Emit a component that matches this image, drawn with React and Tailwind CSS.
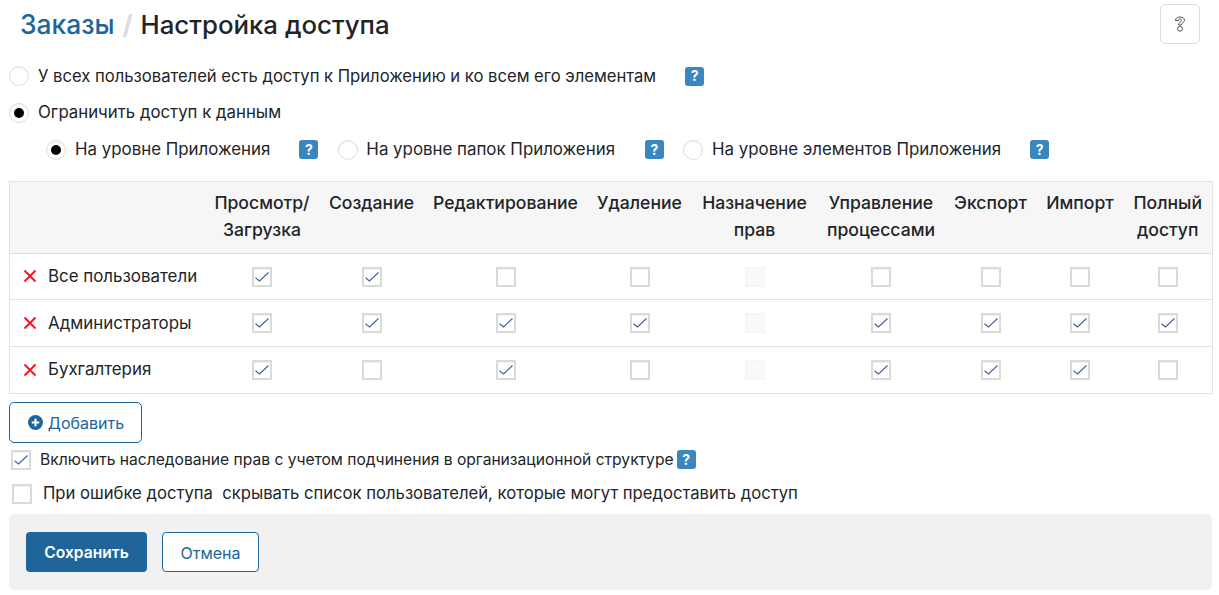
const Q = ({ className = "" }) => (
  <span className={"inline-flex h-[19px] w-[19px] items-center justify-center rounded-[3px] bg-[#3a87c0] text-[14px] leading-none font-bold text-white " + className}>?</span>
);

const Radio = ({ on }) => (
  <span className="flex h-[20px] w-[20px] shrink-0 items-center justify-center rounded-full border border-[#dddddd] bg-white shadow-[inset_0_1px_1px_rgba(0,0,0,0.05)]">
    {on && <span className="h-[10px] w-[10px] rounded-full bg-black" />}
  </span>
);

const Check = ({ on, disabled, className = "" }) => (
  <span className={"block h-[20px] w-[20px] shrink-0 border-2 " + (disabled ? "border-[#f6f6f6] bg-[#f9f9f9] " : "border-[#dadada] bg-white shadow-[inset_0_1px_1px_rgba(0,0,0,0.06)] ") + className}>
    {on && (
      <svg viewBox="0 0 16 16" className="h-[16px] w-[16px]" fill="none">
        <path d="M1.5 8.8 L5.5 12 L14.5 3.5" stroke="#3f6099" strokeWidth="1.1" />
      </svg>
    )}
  </span>
);

const headers = [
  ["Просмотр/", "Загрузка"],
  ["Создание"],
  ["Редактирование"],
  ["Удаление"],
  ["Назначение", "прав"],
  ["Управление", "процессами"],
  ["Экспорт"],
  ["Импорт"],
  ["Полный", "доступ"],
];

const rows = [
  ["Все пользователи", [1, 1, 0, 0, 2, 0, 0, 0, 0], "h-[46px]", ""],
  ["Администраторы", [1, 1, 1, 1, 2, 1, 1, 1, 1], "h-[47px]", "pt-[2px]"],
  ["Бухгалтерия", [1, 0, 1, 0, 2, 1, 1, 1, 0], "h-[47px]", ""],
];

const widths = ["w-[195px]", "w-[115px]", "w-[104px]", "w-[164px]", "w-[104px]", "w-[126px]", "w-[127px]", "w-[92px]", "w-[87px]", "w-[89px]"];

export default function App() {
  return (
    <div className="h-[595px] w-[1219px] overflow-hidden bg-white pr-[7px] pl-[9px] font-['Inter','Liberation_Sans',sans-serif] text-[16.63px] text-[#212529]">
      <div className="flex h-[50px] items-start justify-between">
        <h1 className="mt-[8px] ml-[11px] flex items-baseline text-[25.8px] leading-[32px] font-medium">
          <span className="text-[26.4px] text-[#20659a]">Заказы</span>
          <span className="mx-[8px] font-bold text-[#dcdcdc]">/</span>
          <span>Настройка доступа</span>
        </h1>
        <button className="mt-[4px] mr-[12px] flex h-[40px] w-[40px] items-center justify-center rounded-[5px] border border-[#dddddd] bg-white">
          <svg viewBox="0 0 12 16" className="h-[16px] w-[12px]" fill="none" stroke="#555555" strokeWidth="1">
            <path d="M1.5 4.5 C1.5 2 3.5 1 6 1 C8.5 1 10.5 2.2 10.5 4.3 C10.5 6.5 7.5 6.8 7.5 9 L4.5 9 C4.5 6.2 7.6 6 7.6 4.5 C7.6 3.4 7 3 6 3 C5 3 4.4 3.5 4.4 4.5 Z" />
            <circle cx="6" cy="12.8" r="2.4" />
          </svg>
        </button>
      </div>

      <div className="mt-[8px] flex h-[36px] items-center">
        <Radio />
        <span className="ml-[9px]">У всех пользователей есть доступ к Приложению и ко всем его элементам</span>
        <Q className="ml-[29px]" />
      </div>
      <div className="flex h-[37px] items-center text-[16.8px]">
        <Radio on />
        <span className="ml-[9px]">Ограничить доступ к данным</span>
      </div>
      <div className="ml-[37px] flex h-[37px] items-center text-[16.88px]">
        <Radio on />
        <span className="ml-[9px]">На уровне Приложения</span>
        <Q className="ml-[29px]" />
        <span className="ml-[20px]"><Radio /></span>
        <span className="ml-[8px]">На уровне папок Приложения</span>
        <Q className="ml-[30px]" />
        <span className="ml-[19px]"><Radio /></span>
        <span className="ml-[9px]">На уровне элементов Приложения</span>
        <Q className="ml-[29px]" />
      </div>

      <table className="mt-[13px] w-[1203px] table-fixed border-collapse border border-[#e2e3e6]">
        <colgroup>
          {widths.map((w, i) => <col key={i} className={w} />)}
        </colgroup>
        <thead>
          <tr className="h-[72px] border-b border-[#dcdde0] bg-[#f6f6f7]">
            <th />
            {headers.map((h, i) => (
              <th key={i} className="pt-[7px] text-center align-top text-[17.6px] leading-[27px] font-medium">
                {h.map((l) => <div key={l} className="whitespace-nowrap">{l}</div>)}
              </th>
            ))}
          </tr>
        </thead>
        <tbody>
          {rows.map(([name, vals, h, pad]) => (
            <tr key={name} className={h + " border-b border-[#e2e3e6]"}>
              <td>
                <div className="flex items-center">
                  <svg viewBox="0 0 14 14" className="ml-[13px] h-[14px] w-[14px]" fill="none" stroke="#fb0d1b" strokeWidth="1.8">
                    <path d="M1.5 1.5 L12.5 12.5 M12.5 1.5 L1.5 12.5" />
                  </svg>
                  <span className={"ml-[11px] text-[16.9px] " + pad}>{name}</span>
                </div>
              </td>
              {vals.map((v, i) => (
                <td key={i}>
                  <div className="flex justify-center">
                    <Check on={v === 1} disabled={v === 2} />
                  </div>
                </td>
              ))}
            </tr>
          ))}
        </tbody>
      </table>

      <button className="mt-[8px] flex h-[41px] w-[133px] items-center justify-center rounded-[5px] border border-[#20659a] bg-white pl-[1px] text-[16px] text-[#20659a]">
        <svg viewBox="0 0 14 14" className="mr-[5px] h-[15px] w-[15px]">
          <circle cx="7" cy="7" r="7" fill="#20659a" />
          <path d="M7 3.5 V10.5 M3.5 7 H10.5" stroke="#fff" strokeWidth="2" />
        </svg>
        Добавить
      </button>

      <div className="mt-[6px] ml-[2px] flex h-[21px] items-center text-[15.62px]">
        <Check on />
        <span className="ml-[9px]">Включить наследование прав с учетом подчинения в организационной структуре</span>
        <Q className="ml-[3px]" />
      </div>
      <div className="mt-[13px] ml-[3px] flex h-[21px] items-center text-[16.65px]">
        <Check />
        <span className="ml-[11px] whitespace-pre">При ошибке доступа  скрывать список пользователей, которые могут предоставить доступ</span>
      </div>

      <div className="mt-[10px] flex h-[76px] w-[1203px] items-center rounded-[5px] bg-[#f1f1f1] pl-[17px]">
        <button className="flex h-[40px] w-[121px] items-center justify-center rounded-[4px] bg-[#20659a] pt-[1px] text-[15.6px] font-semibold text-white">Сохранить</button>
        <button className="ml-[15px] flex h-[40px] w-[97px] items-center justify-center rounded-[4px] border border-[#20659a] bg-white pt-[1px] text-[16px] text-[#20659a]">Отмена</button>
      </div>
    </div>
  );
}
